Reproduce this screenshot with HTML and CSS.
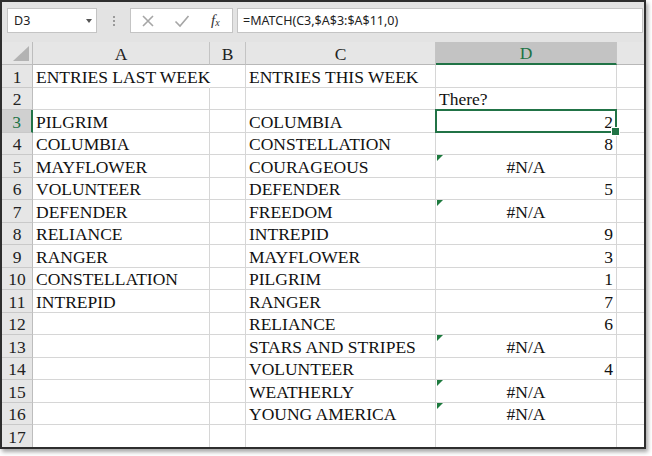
FILE: index.html
```html
<!DOCTYPE html>
<html>
<head>
<meta charset="utf-8">
<link rel="stylesheet" href="styles.css">
</head>
<body>
<div class="window">
  <div class="toolbar">
    <div class="namebox"><span>D3</span><span class="caret"></span></div>
    <div class="sep"><span></span><span></span><span></span></div>
    <div class="btns">
      <svg class="ico" width="14" height="14" viewBox="0 0 14 14"><path d="M2 2 L12 12 M12 2 L2 12" stroke="#a6a6a6" stroke-width="1.6" fill="none"/></svg>
      <svg class="ico" width="16" height="14" viewBox="0 0 16 14"><path d="M1.5 7.5 L6 12 L14.5 2" stroke="#a6a6a6" stroke-width="1.6" fill="none"/></svg>
      <span class="fx">f<sub>x</sub></span>
    </div>
    <div class="formula">=MATCH(C3,$A$3:$A$11,0)</div>
  </div>
  <div class="sheet">
    <div class="corner"><span class="tri"></span></div>
    <div class="ch">A</div><div class="ch">B</div><div class="ch">C</div><div class="ch sel">D</div><div class="ch last"></div>

    <div class="rh">1</div><div class="c ovf">ENTRIES LAST WEEK</div><div class="c"></div><div class="c">ENTRIES THIS WEEK</div><div class="c"></div><div class="c last"></div>
    <div class="rh">2</div><div class="c"></div><div class="c"></div><div class="c"></div><div class="c">There?</div><div class="c last"></div>
    <div class="rh sel">3</div><div class="c">PILGRIM</div><div class="c"></div><div class="c">COLUMBIA</div><div class="c num active">2</div><div class="c last"></div>
    <div class="rh">4</div><div class="c">COLUMBIA</div><div class="c"></div><div class="c">CONSTELLATION</div><div class="c num">8</div><div class="c last"></div>
    <div class="rh">5</div><div class="c">MAYFLOWER</div><div class="c"></div><div class="c">COURAGEOUS</div><div class="c err">#N/A</div><div class="c last"></div>
    <div class="rh">6</div><div class="c">VOLUNTEER</div><div class="c"></div><div class="c">DEFENDER</div><div class="c num">5</div><div class="c last"></div>
    <div class="rh">7</div><div class="c">DEFENDER</div><div class="c"></div><div class="c">FREEDOM</div><div class="c err">#N/A</div><div class="c last"></div>
    <div class="rh">8</div><div class="c">RELIANCE</div><div class="c"></div><div class="c">INTREPID</div><div class="c num">9</div><div class="c last"></div>
    <div class="rh">9</div><div class="c">RANGER</div><div class="c"></div><div class="c">MAYFLOWER</div><div class="c num">3</div><div class="c last"></div>
    <div class="rh">10</div><div class="c">CONSTELLATION</div><div class="c"></div><div class="c">PILGRIM</div><div class="c num">1</div><div class="c last"></div>
    <div class="rh">11</div><div class="c">INTREPID</div><div class="c"></div><div class="c">RANGER</div><div class="c num">7</div><div class="c last"></div>
    <div class="rh">12</div><div class="c"></div><div class="c"></div><div class="c">RELIANCE</div><div class="c num">6</div><div class="c last"></div>
    <div class="rh">13</div><div class="c"></div><div class="c"></div><div class="c">STARS AND STRIPES</div><div class="c err">#N/A</div><div class="c last"></div>
    <div class="rh">14</div><div class="c"></div><div class="c"></div><div class="c">VOLUNTEER</div><div class="c num">4</div><div class="c last"></div>
    <div class="rh">15</div><div class="c"></div><div class="c"></div><div class="c">WEATHERLY</div><div class="c err">#N/A</div><div class="c last"></div>
    <div class="rh">16</div><div class="c"></div><div class="c"></div><div class="c">YOUNG AMERICA</div><div class="c err">#N/A</div><div class="c last"></div>
    <div class="rh">17</div><div class="c"></div><div class="c"></div><div class="c"></div><div class="c"></div><div class="c last"></div>
  </div>
</div>
</body>
</html>
```
FILE: styles.css
```css
* { box-sizing: border-box; }
html, body { margin: 0; padding: 0; background: #ffffff; }
body { width: 652px; height: 456px; overflow: hidden; }

.window {
  width: 646px;
  height: 449px;
  border: 2px solid #2e2e2e;
  background: #ffffff;
  box-shadow: 2px 3px 4px rgba(0,0,0,0.35);
  overflow: hidden;
}

.toolbar {
  height: 40px;
  background: #e3e3e3;
  display: flex;
  align-items: flex-start;
  padding: 6px 0 0 5px;
  font-family: "Noto Sans", "Open Sans", sans-serif;
  font-size: 12.5px;
  color: #222;
}
.namebox {
  width: 90px;
  height: 25px;
  background: #fff;
  border: 1px solid #c4c4c4;
  display: flex;
  align-items: center;
  justify-content: space-between;
  padding: 0 4px 0 6px;
}
.caret {
  width: 0; height: 0;
  border-left: 3.5px solid transparent;
  border-right: 3.5px solid transparent;
  border-top: 4px solid #555;
}
.sep {
  width: 33px;
  height: 25px;
  display: flex;
  flex-direction: column;
  align-items: center;
  justify-content: center;
  gap: 2px;
}
.sep span { width: 2px; height: 2px; background: #9a9a9a; display: block; }
.btns {
  width: 103px;
  height: 25px;
  background: #fff;
  border: 1px solid #c4c4c4;
  display: flex;
  align-items: center;
  padding: 0 0 0 10px;
  gap: 19px;
}
.ico { display: block; }
.fx {
  font-family: "Liberation Serif", serif;
  font-style: italic;
  font-size: 15px;
  color: #333;
  margin-left: 2px;
}
.fx sub { font-size: 10px; vertical-align: -1px; }
.formula {
  margin-left: 4px;
  width: 406px;
  height: 25px;
  background: #fff;
  border: 1px solid #c4c4c4;
  display: flex;
  align-items: center;
  padding-left: 5px;
}

.sheet {
  display: grid;
  grid-template-columns: 31px 177px 36px 190px 181px 1fr;
  grid-template-rows: 23px repeat(17, 22.5px);
  font-family: "Liberation Serif", "Times New Roman", serif;
  font-size: 17.5px;
  color: #111;
}
.corner {
  background: #e6e6e6;
  border-right: 1px solid #bdbdbd;
  border-bottom: 1px solid #bdbdbd;
  position: relative;
}
.tri {
  position: absolute;
  right: 3px;
  bottom: 3px;
  width: 0; height: 0;
  border-left: 16px solid transparent;
  border-bottom: 15px solid #b3b3b3;
}
.ch {
  background: #e6e6e6;
  border-right: 1px solid #c4c4c4;
  border-bottom: 1px solid #b8b8b8;
  display: flex;
  align-items: center;
  justify-content: center;
  line-height: 20px;
  padding-top: 1px;
  color: #222;
}
.ch.sel {
  background: #c3c3c3;
  color: #217346;
  border-bottom: 2px solid #217346;
}
.ch.last { border-right: none; }
.rh {
  background: #e6e6e6;
  border-right: 1px solid #bdbdbd;
  border-bottom: 1px solid #c9c9c9;
  display: flex;
  align-items: flex-end;
  justify-content: center;
  line-height: 20px;
  color: #222;
}
.rh.sel {
  background: #d0d0d0;
  color: #217346;
  border-right: 2px solid #217346;
}
.c {
  border-right: 1px solid #d6d6d6;
  border-bottom: 1px solid #d6d6d6;
  display: flex;
  align-items: flex-end;
  padding: 0 3px;
  line-height: 20px;
  white-space: nowrap;
  position: relative;
}
.c.ovf { border-right-color: transparent; overflow: visible; z-index: 1; }
.c.last { border-right: none; }
.num { justify-content: flex-end; }
.err { justify-content: center; }
.err::before {
  content: "";
  position: absolute;
  left: 1px;
  top: 0;
  width: 0; height: 0;
  border-top: 6px solid #1d7a3e;
  border-right: 6px solid transparent;
}
.active::after {
  content: "";
  position: absolute;
  left: -1px; top: -1px; right: -1px; bottom: -1px;
  border: 2px solid #217346;
  z-index: 2;
}
.active::before {
  content: "";
  position: absolute;
  right: -4px;
  bottom: -4px;
  width: 7px;
  height: 7px;
  background: #217346;
  border: 1px solid #fff;
  z-index: 3;
}
```
